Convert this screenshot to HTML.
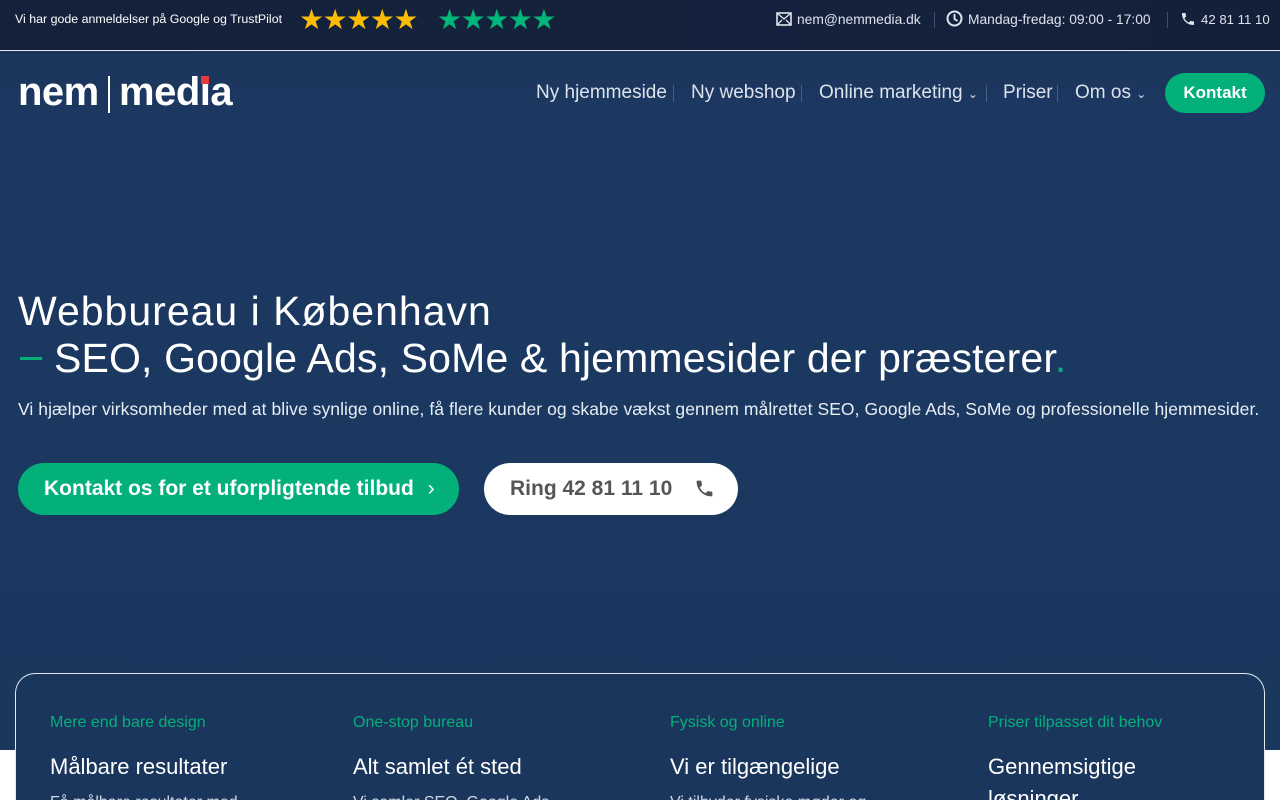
<!DOCTYPE html>
<html><head><meta charset="utf-8">
<style>
*{margin:0;padding:0;box-sizing:border-box}
html,body{width:1280px;height:800px;overflow:hidden}
body{font-family:"Liberation Sans",sans-serif;background:#fff;position:relative}
.hero{position:absolute;left:0;top:0;width:1280px;height:750px;background:linear-gradient(#1b3256 0px,#1c3862 120px,#1a375e 750px)}
.top{position:absolute;left:0;top:0;width:1280px;height:51px;background:linear-gradient(90deg,#13213a,#14223d 60%,#132039);border-bottom:1px solid #e8ecf2}
.t{position:absolute;color:#fff;white-space:nowrap}
.star{font-size:28px;letter-spacing:-1.5px}
.nav{position:absolute;top:82px;font-size:19px;color:#dde3ec;white-space:nowrap}
.sep{position:absolute;top:85px;width:1px;height:17px;background:#4a5f80}
.card{position:absolute;left:15px;top:673px;width:1250px;height:127px;background:#1b365d;border:1px solid #e3e8ef;border-bottom:none;border-radius:20px 20px 0 0;overflow:hidden}
.lbl{position:absolute;top:40px;color:#03b07a;font-size:16px;white-space:nowrap}
.h{position:absolute;top:77px;color:#fff;font-size:22px;line-height:32px;white-space:nowrap}
.p{position:absolute;top:120px;font-size:16px;line-height:18px;color:#cfd8e4;white-space:nowrap}
</style></head><body>
<div class="hero"></div>
<div class="top">
 <div class="t" style="left:15px;top:12px;font-size:12.4px">Vi har gode anmeldelser på Google og TrustPilot</div>
 <div class="t star" style="left:299px;top:3px;color:#fbbc05">★★★★★</div>
 <div class="t star" style="left:437px;top:3px;color:#00b67a">★★★★★</div>
 <svg style="position:absolute;left:776px;top:12px" width="16" height="14" viewBox="0 0 16 14"><rect x="1" y="1" width="14" height="12" fill="none" stroke="#dfe5ee" stroke-width="1.6"/><path d="M1 1l7 6 7-6M1 13l5-5M15 13l-5-5" fill="none" stroke="#dfe5ee" stroke-width="1.3"/></svg>
 <div class="t" style="left:797px;top:12px;font-size:13.8px;color:#dde3ec">nem@nemmedia.dk</div>
 <div style="position:absolute;left:934px;top:12px;width:1px;height:16px;background:#3c4f6e"></div>
 <svg style="position:absolute;left:946px;top:10px" width="17" height="17" viewBox="0 0 17 17"><circle cx="8.5" cy="8.5" r="7" fill="none" stroke="#dfe5ee" stroke-width="2"/><path d="M8.5 4v5l3 2" fill="none" stroke="#dfe5ee" stroke-width="1.8"/></svg>
 <div class="t" style="left:968px;top:12px;font-size:13.8px;color:#dde3ec">Mandag-fredag: 09:00 - 17:00</div>
 <div style="position:absolute;left:1167px;top:12px;width:1px;height:16px;background:#3c4f6e"></div>
 <svg style="position:absolute;left:1180px;top:11px" width="16" height="16" viewBox="0 0 24 24"><path fill="#dfe5ee" d="M6.6 10.8c1.4 2.8 3.8 5.1 6.6 6.6l2.2-2.2c.3-.3.7-.4 1-.2 1.1.4 2.3.6 3.6.6.6 0 1 .4 1 1V20c0 .6-.4 1-1 1C10.6 21 3 13.4 3 4c0-.6.4-1 1-1h3.5c.6 0 1 .4 1 1 0 1.3.2 2.5.6 3.6.1.3 0 .7-.2 1z"/></svg>
 <div class="t" style="left:1201px;top:12px;font-size:13.2px;color:#dde3ec">42 81 11 10</div>
</div>
<div class="t" style="left:18px;top:70px;font-size:40px;font-weight:bold;letter-spacing:-0.5px">nem</div>
<div style="position:absolute;left:108px;top:76px;width:2px;height:37px;background:#fff"></div>
<div class="t" style="left:119px;top:70px;font-size:40px;font-weight:bold;letter-spacing:-0.5px">med<span style="position:relative">ı<span style="position:absolute;left:1px;top:6px;width:8px;height:8px;background:#e63b3b"></span></span>a</div>
<div class="nav" style="left:536px">Ny hjemmeside</div><div class="sep" style="left:673px"></div>
<div class="nav" style="left:691px">Ny webshop</div><div class="sep" style="left:801px"></div>
<div class="nav" style="left:819px">Online marketing <span style="font-size:12px">⌄</span></div><div class="sep" style="left:986px"></div>
<div class="nav" style="left:1003px">Priser</div><div class="sep" style="left:1057px"></div>
<div class="nav" style="left:1075px">Om os <span style="font-size:12px">⌄</span></div>
<div style="position:absolute;left:1165px;top:73px;width:100px;height:40px;border-radius:20px;background:#03b07a;color:#fff;font-weight:bold;font-size:17px;text-align:center;line-height:39px">Kontakt</div>
<div class="t" style="left:18px;top:288px;font-size:41px;letter-spacing:1.0px">Webbureau i København</div>
<div style="position:absolute;left:20px;top:357px;width:22px;height:3px;background:#03b07a"></div>
<div class="t" style="left:54px;top:335px;font-size:41px;letter-spacing:0.15px">SEO, Google Ads, SoMe &amp; hjemmesider der præsterer<span style="color:#03b07a">.</span></div>
<div class="t" style="left:18px;top:399px;font-size:17.5px;letter-spacing:0.06px;color:#e8edf4">Vi hjælper virksomheder med at blive synlige online, få flere kunder og skabe vækst gennem målrettet SEO, Google Ads, SoMe og professionelle hjemmesider.</div>
<div style="position:absolute;left:18px;top:463px;width:441px;height:52px;border-radius:26px;background:#03b07a;color:#fff;font-weight:bold;font-size:21px;line-height:52px;padding-left:26px">Kontakt os for et uforpligtende tilbud <span style="margin-left:8px;font-weight:normal">›</span></div>
<div style="position:absolute;left:484px;top:463px;width:254px;height:52px;border-radius:26px;background:#fff;color:#555;font-weight:bold;font-size:21px;line-height:52px;padding-left:26px">Ring 42 81 11 10</div>
<svg style="position:absolute;left:694px;top:478px" width="21" height="21" viewBox="0 0 24 24"><path fill="#555" d="M6.6 10.8c1.4 2.8 3.8 5.1 6.6 6.6l2.2-2.2c.3-.3.7-.4 1-.2 1.1.4 2.3.6 3.6.6.6 0 1 .4 1 1V20c0 .6-.4 1-1 1C10.6 21 3 13.4 3 4c0-.6.4-1 1-1h3.5c.6 0 1 .4 1 1 0 1.3.2 2.5.6 3.6.1.3 0 .7-.2 1z"/></svg>
<div class="card">
<div class="lbl" style="left:34px">Mere end bare design</div>
<div class="lbl" style="left:337px">One-stop bureau</div>
<div class="lbl" style="left:654px">Fysisk og online</div>
<div class="lbl" style="left:972px">Priser tilpasset dit behov</div>
<div class="h" style="left:34px">Målbare resultater</div>
<div class="h" style="left:337px">Alt samlet ét sted</div>
<div class="h" style="left:654px">Vi er tilgængelige</div>
<div class="h" style="left:972px">Gennemsigtige<br>løsninger</div>
<div class="p" style="left:34px">Få målbare resultater med</div>
<div class="p" style="left:337px">Vi samler SEO, Google Ads</div>
<div class="p" style="left:654px">Vi tilbyder fysiske møder og</div>
</div>
</body></html>
